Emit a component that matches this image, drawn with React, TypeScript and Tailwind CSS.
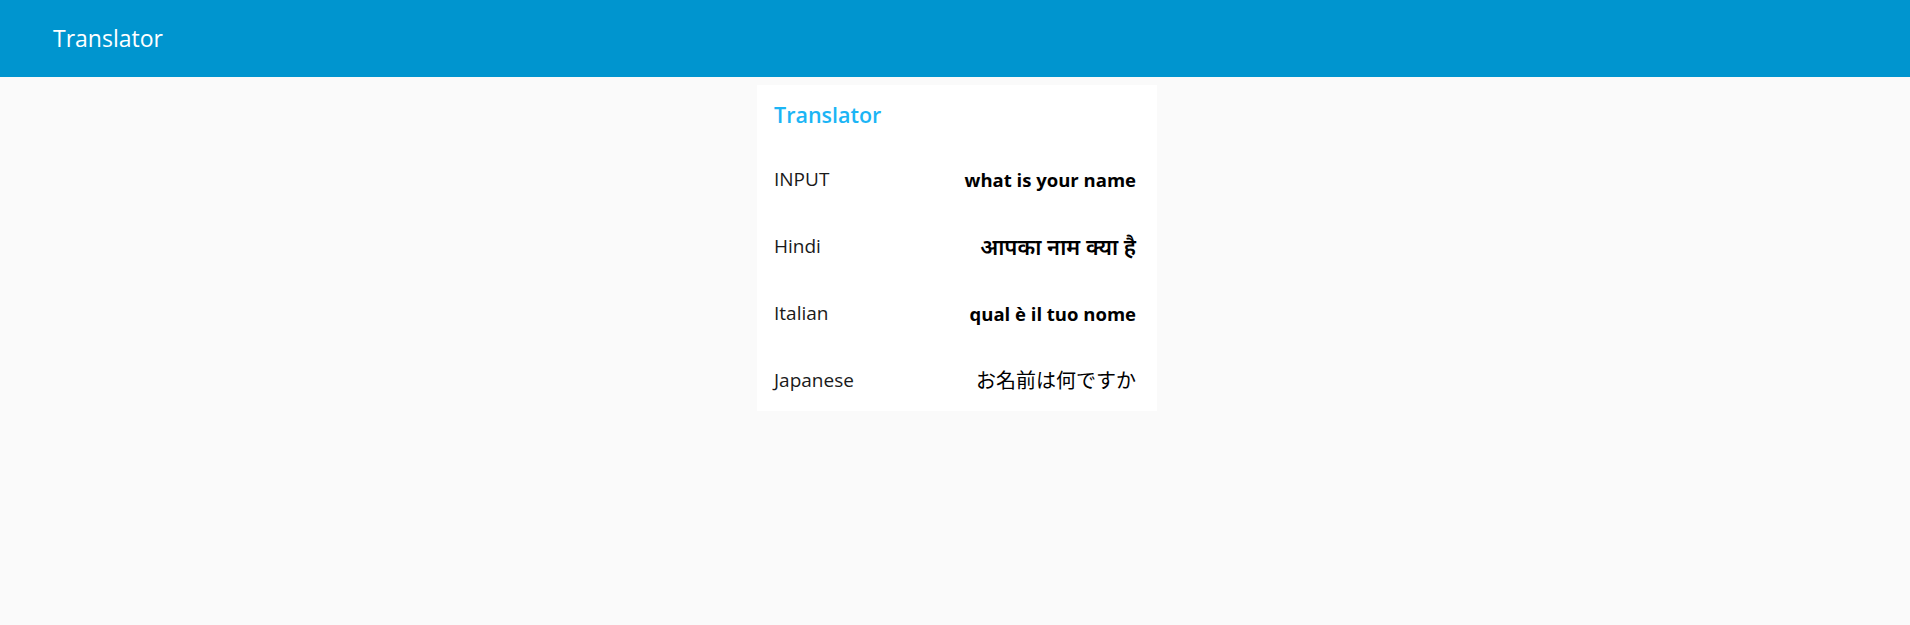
export default function App() {
  const rows = [
    { label: "INPUT", value: "what is your name", cls: "font-bold text-[18.5px]" },
    { label: "Hindi", value: "आपका नाम क्या है", cls: "font-semibold text-[22px]" },
    { label: "Italian", value: "qual è il tuo nome", cls: "font-bold text-[18.5px]" },
    { label: "Japanese", value: "お名前は何ですか", cls: "font-normal text-[20px]" },
  ];
  return (
    <div
      className="min-h-[625px] bg-[#fafafa]"
      style={{ fontFamily: '"Open Sans", "Noto Sans", "Noto Sans CJK JP", sans-serif' }}
    >
      <header className="h-[77px] bg-[#0095cf] flex items-center pl-[53px]">
        <span className="text-white text-[23px] leading-none">Translator</span>
      </header>
      <div className="flex justify-center pl-[4px]">
        <div className="w-[400px] mt-[8px] bg-white">
          <div className="h-[58px] flex items-center pl-[17px] pt-[2px]">
            <span className="text-[#1cb5f5] text-[21.5px] font-semibold leading-none">Translator</span>
          </div>
          {rows.map((r) => (
            <div key={r.label} className="h-[67px] flex items-center justify-between pl-[17px] pr-[21px] pt-[6px]">
              <span className="text-[19px] text-[#1a1a1a]">{r.label}</span>
              <span className={`text-black ${r.cls}`}>{r.value}</span>
            </div>
          ))}
        </div>
      </div>
    </div>
  );
}
